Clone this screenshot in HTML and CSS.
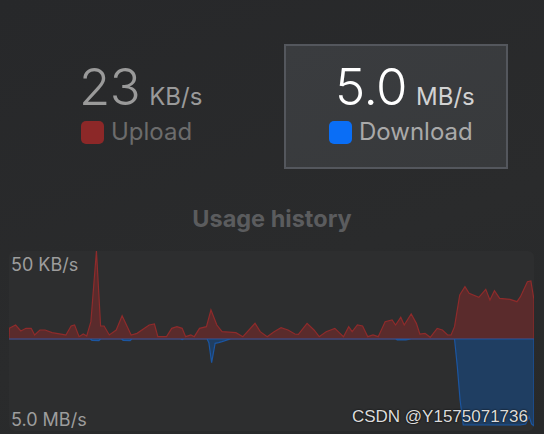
FILE: index.html
```html
<!DOCTYPE html>
<html>
<head>
<meta charset="utf-8">
<link rel="stylesheet" href="styles.css">
</head>
<body>
<div class="stats">
  <div class="stat">
    <div class="value"><span class="num dim">23</span><span class="unit dim">KB/s</span></div>
    <div class="legend"><span class="swatch red"></span><span class="lname dim2">Upload</span></div>
  </div>
  <div class="stat active">
    <div class="value"><span class="num">5.0</span><span class="unit">MB/s</span></div>
    <div class="legend"><span class="swatch blue"></span><span class="lname">Download</span></div>
  </div>
</div>
<div class="title">Usage history</div>
<div class="chart">
  <svg class="graph" viewBox="26 153 1513 540" preserveAspectRatio="none">
    <path class="up" d="M26,417 L27,385 L45,375 L60,393 L75,385 L90,385 L100,405 L115,390 L130,390 L150,398 L180,403 L190,405 L205,378 L215,375 L228,410 L240,402 L250,408 L262,365 L278,153 L290,378 L300,378 L315,405 L335,390 L352,347 L378,405 L395,400 L430,375 L445,372 L455,410 L480,410 L495,385 L510,380 L525,385 L535,410 L550,405 L560,410 L575,385 L595,380 L608,330 L625,375 L640,395 L680,398 L700,410 L735,370 L750,395 L770,410 L790,395 L810,383 L830,390 L850,402 L860,403 L885,370 L905,390 L920,410 L940,395 L965,385 L980,400 L990,410 L1005,380 L1015,395 L1030,375 L1045,378 L1060,410 L1075,405 L1090,410 L1110,365 L1130,360 L1140,375 L1155,352 L1165,375 L1185,342 L1200,370 L1210,402 L1225,400 L1240,412 L1260,385 L1275,390 L1290,405 L1300,405 L1310,380 L1325,285 L1340,260 L1352,280 L1380,292 L1400,268 L1412,300 L1425,272 L1440,295 L1470,298 L1490,305 L1500,290 L1520,245 L1530,243 L1539,300 L1539,417 Z"/>
    <path class="down" d="M26,417 L260,417 L265,421 L285,422 L290,417 L350,417 L355,421 L375,422 L380,417 L520,417 L525,419 L530,417 L597,417 L602,428 L610,488 L620,430 L630,428 L640,425 L655,420 L665,417 L1140,417 L1145,420 L1160,419 L1170,420 L1185,417 L1310,417 L1318,500 L1326,600 L1335,675 L1500,675 L1515,672 L1525,650 L1532,672 L1539,678 L1539,417 Z"/>
  </svg>
  <span class="axis top">50 KB/s</span>
  <span class="axis bottom">5.0 MB/s</span>
  <span class="mark">CSDN @Y1575071736</span>
</div>
</body>
</html>
```

FILE: styles.css
```css
html, body {
  margin: 0;
  padding: 0;
}
body {
  width: 544px;
  height: 434px;
  overflow: hidden;
  background: linear-gradient(160deg, #27282a 0%, #2a2b2c 60%, #27292a 100%);
  font-family: Inter, "Noto Sans", sans-serif;
}
.stats {
  display: grid;
  grid-template-columns: 224px 224px;
  gap: 24px;
  padding: 44px 36px 0;
}
.stat {
  box-sizing: border-box;
  height: 125px;
  border: 2px solid transparent;
  padding: 16px 0 0 43px;
}
.stat.active {
  background: linear-gradient(160deg, #3a3c3f 0%, #383a3c 100%);
  border-color: #54575d;
}
.value {
  display: flex;
  align-items: baseline;
  height: 50px;
  margin-left: -2px;
}
.stat.active .value {
  margin-left: 6px;
}
.num {
  font-size: 51px;
  line-height: 50px;
  font-weight: 300;
  color: #ffffff;
  letter-spacing: -0.5px;
}
.unit {
  font-size: 24px;
  line-height: 24px;
  font-weight: 400;
  color: #d2d2d2;
  margin-left: 9px;
}
.num.dim, .unit.dim {
  color: #9a9a9a;
}
.legend {
  display: flex;
  align-items: center;
  gap: 7px;
  margin-top: 8px;
  height: 24px;
}
.swatch {
  width: 23px;
  height: 23px;
  border-radius: 5px;
  flex: none;
}
.swatch.red {
  background: #8c2828;
}
.swatch.blue {
  background: #0a6ef6;
}
.lname {
  font-size: 24px;
  line-height: 24px;
  color: #a9a9a9;
}
.lname.dim2 {
  color: #6c6c6c;
}
.title {
  margin-top: 36px;
  text-align: center;
  font-size: 23.5px;
  line-height: 28px;
  font-weight: 700;
  color: #5b5c5e;
}
.chart {
  position: relative;
  margin: 18px 10px 0 9px;
  height: 180px;
  border-radius: 6px;
  background: #2d2e2f;
  overflow: hidden;
}
.graph {
  display: block;
  width: 525px;
  height: 180px;
}
.up {
  fill: #5a2b2c;
  stroke: #8e2b2b;
  stroke-width: 1.2;
  vector-effect: non-scaling-stroke;
}
.down {
  fill: #1f3e62;
  stroke: #1b56a2;
  stroke-width: 1.2;
  vector-effect: non-scaling-stroke;
}
.axis {
  position: absolute;
  left: 2px;
  font-size: 18px;
  line-height: 18px;
  color: #9d9d9d;
}
.axis.top {
  top: 5px;
}
.axis.bottom {
  bottom: 2px;
}
.mark {
  position: absolute;
  right: 6px;
  bottom: 6px;
  font-family: "Liberation Sans", Arial, sans-serif;
  font-size: 17px;
  line-height: 17px;
  color: #dcdcdc;
  text-shadow: 0 0 2px #111, 0 0 1px #111;
}
```
